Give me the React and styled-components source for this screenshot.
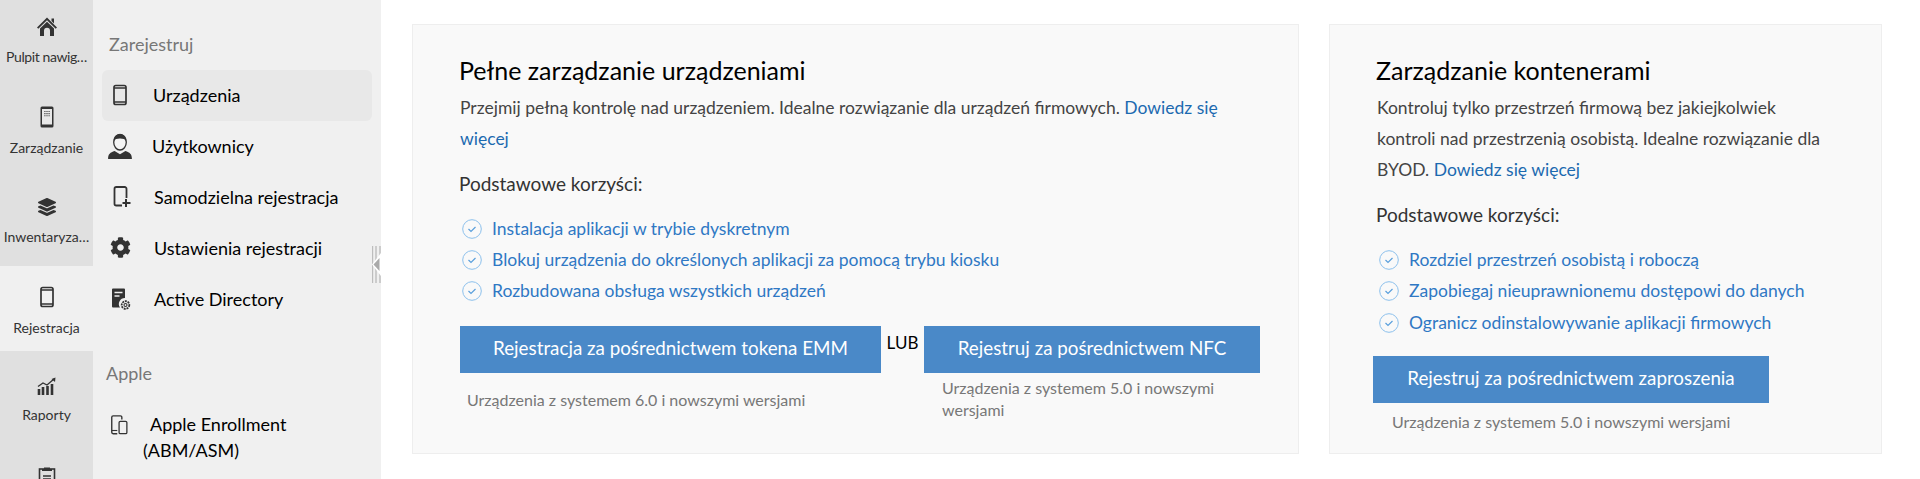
import React from 'react';
import styled, { createGlobalStyle } from 'styled-components';
import { FaLayerGroup, FaCog } from 'react-icons/fa';

const Global = createGlobalStyle`
  html, body { margin: 0; padding: 0; height: 100%; overflow: hidden; background: #fff; }
  body { font-family: Lato, "Noto Sans", sans-serif; }
  * { box-sizing: border-box; }
`;

const Page = styled.div`display: flex; height: 100vh; overflow: hidden;`;

const Rail = styled.nav`width: 93px; flex: none; background: #e0e0e0; overflow: hidden;`;
const RailList = styled.div`margin-top: -4px;`;
const RailItem = styled.div`
  height: 85px; margin-bottom: 5px; display: flex; flex-direction: column; align-items: center;
  padding-top: 19px; color: #333;
  background: ${p => (p.$active ? '#f0f0f0' : 'transparent')};
`;
const RailIcon = styled.div`height: 24px; width: 24px; display: flex; align-items: center; justify-content: center; color: #333;`;
const RailLabel = styled.div`
  margin-top: ${p => p.$top ?? 8}px; font-size: 14px; line-height: 20px; text-align: center; color: #333; white-space: nowrap;
  letter-spacing: ${p => p.$tight || 0}px;
`;

const SubPanel = styled.aside`
  position: relative; width: 288px; flex: none; background: #f0f0f0; padding: 32px 9px 0 9px; overflow: hidden;
`;
const SubHeading = styled.div`
  font-size: 18px; line-height: 24px; color: #777; padding-left: ${p => p.$indent}px;
  margin-top: ${p => p.$top || 0}px; margin-bottom: ${p => p.$bottom || 0}px;
`;
const SubRow = styled.div`
  height: 51px; display: flex; align-items: center; border-radius: 6px; color: #000; padding-bottom: 2px;
  font-size: 18px; background: ${p => (p.$active ? '#e8e8e8' : 'transparent')};
`;
const SubIcon = styled.span`width: 36px; flex: none; display: flex; align-items: center; justify-content: center;`;
const SubText = styled.span`margin-left: ${p => p.$gap}px;`;
const AppleRow = styled.div`
  color: #000; font-size: 18px; line-height: 26px; padding-left: 41px; width: 240px;
`;
const AppleIcon = styled.span`display: inline-flex; vertical-align: -5px; margin-left: -34px; margin-right: 19px; width: 22px;`;
const Handle = styled.div`position: absolute; right: 0; top: 246px; width: 9px; height: 37px;`;

const Main = styled.main`
  flex: 1; min-width: 0; height: 100vh; overflow-y: scroll; padding: 24px 0 0 31px; background: #fff;
  &::-webkit-scrollbar { width: 21px; }
  &::-webkit-scrollbar-track { background: #f1f1f1; }
  &::-webkit-scrollbar-thumb { background: #c1c1c1; border: 2px solid #f1f1f1; border-top: 0; border-bottom: 0; }
`;
const Cards = styled.div`display: flex; gap: 30px; align-items: flex-start; min-height: 711px;`;
const Card = styled.section`
  width: ${p => p.$w}px; height: 430px; flex: none; background: #f9f9f9; border: 1px solid #eee;
  padding: 28px 0 0 ${p => p.$pad}px;
`;
const Title = styled.h2`margin: 0; font-size: 25px; font-weight: 400; line-height: 34px; color: #000;`;
const Para = styled.p`margin: 5px 0 0 1px; font-size: 17.5px; line-height: 31px; color: #444; width: ${p => p.$w}px;`;
const Link = styled.a`color: #1c6ab0; text-decoration: none;`;
const Benefits = styled.div`margin-top: 14px; font-size: 19px; line-height: 31px; color: #333;`;
const List = styled.ul`list-style: none; margin: 14px 0 0 3px; padding: 0;`;
const ListItem = styled.li`display: flex; align-items: center; height: 31px; font-size: 17.5px; color: #2f78c4; margin-top: ${p => p.$nudge || 0}px;`;
const Check = styled.span`display: flex; width: 30px; flex: none;`;
const ButtonRow = styled.div`display: flex; margin: ${p => p.$top}px 0 0 ${p => p.$left || 0}px; align-items: flex-start;`;
const Col = styled.div`width: ${p => p.$w}px; flex: none;`;
const Button = styled.button`
  display: block; width: 100%; height: 47px; border: 0; border-radius: 0; background: #4a89c8; color: #fff;
  font-family: inherit; font-size: 18.8px; padding: 0 0 4px;
`;
const Lub = styled.div`width: 43px; flex: none; text-align: center; font-size: 17px; line-height: 24px; padding-top: 5px; color: #000;`;
const Caption = styled.div`
  font-size: 16px; line-height: 22px; color: #777;
  margin: ${p => p.$top}px 0 0 ${p => p.$left}px; width: ${p => p.$w || 'auto'};
`;

const Svg = ({ s = 24, children, vb = '0 0 24 24' }) => (
  <svg width={s} height={s} viewBox={vb} fill="none" aria-hidden="true">{children}</svg>
);

const Home = () => (
  <Svg>
    <path d="M12 2.500 22 12.500l-1.300 1.300L12 5.200 3.300 13.800 2 12.500z" fill="#333" />
    <path d="M16.500 3.500h2.500v5l-2.500-2.500z" fill="#333" />
    <path d="M5 13.500 12 6.800l7 6.700v7.500h-4v-5.200a3 3 0 0 0-6 0V21H5z" fill="#333" />
  </Svg>
);
const Phone = ({ s = 24 }) => (
  <Svg s={s}><rect x="6" y="2.5" width="12" height="19" rx="1.8" stroke="#333" strokeWidth="1.7" /><path d="M6 5h12M6 19h12" stroke="#333" strokeWidth="1.4" /></Svg>
);
const TabletGrid = () => (
  <Svg><rect x="5.5" y="1.5" width="13" height="21" rx="1.5" fill="#333" /><rect x="7" y="4" width="10" height="15.5" fill="#e8e8e8" />
    <path d="M9.3 6.5h1.2M11.4 6.5h1.2M13.5 6.5h1.2M9.3 8.6h1.2M11.4 8.6h1.2M13.5 8.6h1.2M9.3 10.7h1.2M11.4 10.7h1.2M13.5 10.7h1.2" stroke="#444" strokeWidth="1.1" /></Svg>
);
const Chart = () => (
  <Svg><path d="M4 20v-6M8 20v-8M12.5 20v-9M17 20v-11" stroke="#333" strokeWidth="2.6" /><path d="M3 11.5 8 8l4 2 7-6" stroke="#333" strokeWidth="1.3" /><path d="M20.5 2.5 20 7l-3.5-3z" fill="#333" /></Svg>
);
const Clipboard = () => (
  <Svg><rect x="4.5" y="4" width="15" height="18" stroke="#333" strokeWidth="1.6" /><path d="M9 4V2.5h6V4h2v2H7V4z" fill="#333" /><path d="M8 11h8M8 14h8M8 17h5" stroke="#333" strokeWidth="1.3" /></Svg>
);
const Person = () => (
  <Svg s={26} vb="0 0 24 24"><path d="M1 24c0-5 2-6 6-7.500l5 3 5-3c4 1.500 6 2.500 6 7.500z" fill="#333" />
    <ellipse cx="12" cy="8.500" rx="5.800" ry="7.200" fill="#f5f5f5" stroke="#333" strokeWidth="1.200" /><path d="M6.300 8C6 3 9 1 12 1s6 2 5.700 7c-.7-2.500-3-3-5.700-3s-5 .5-5.700 3z" fill="#333" /></Svg>
);
const PhonePlus = () => (
  <Svg><path d="M14 20.500H8.300A1.800 1.800 0 0 1 6.500 18.700V3.800A1.800 1.800 0 0 1 8.300 2h8.400a1.800 1.800 0 0 1 1.800 1.800V13" stroke="#333" strokeWidth="1.800" /><path d="M18 14v8M14.500 18h8" stroke="#333" strokeWidth="2" /></Svg>
);
const ServerGear = () => (
  <Svg><path d="M5 1.500h11a1 1 0 0 1 1 1V11a6 6 0 0 0-5 9.500H5a1 1 0 0 1-1-1v-17a1 1 0 0 1 1-1z" fill="#333" /><path d="M6.500 5.500h8M6.500 9h5" stroke="#f0f0f0" strokeWidth="1.300" />
    <circle cx="17.500" cy="18" r="3.800" stroke="#333" strokeWidth="1.800" strokeDasharray="2 .8" /><circle cx="17.500" cy="18" r="1.500" stroke="#333" strokeWidth="1.100" /></Svg>
);
const Devices = () => (
  <Svg s={22}><path d="M9 21.500H4.500A1.500 1.500 0 0 1 3 20V3.500A1.500 1.500 0 0 1 4.500 2h8A1.500 1.500 0 0 1 14 3.500V6" stroke="#333" strokeWidth="1.500" /><rect x="11" y="8" width="8.500" height="13.500" rx="1.400" stroke="#333" strokeWidth="1.400" /><path d="M3 18h6" stroke="#333" strokeWidth="1.200" /></Svg>
);
const CheckIcon = () => (
  <Svg s={20} vb="0 0 20 20"><circle cx="10" cy="10" r="9.300" stroke="#8cc0ec" strokeWidth="1" /><path d="m6.500 10 2.500 2.500 4.500-4.500" stroke="#5a9fdc" strokeWidth="1.200" /></Svg>
);
const HandleArt = () => (
  <svg width="9" height="37" viewBox="0 0 9 37" aria-hidden="true">
    <path d="M.5 0v37M4 0v37M8 0v37" stroke="#bdbdbd" strokeWidth="1.400" />
    <path d="M9 7v23L0 18.500z" fill="#fff" /><path d="M7.500 12v13L1.500 18.500z" fill="#aaa" />
  </svg>
);

const railItems = [
  { label: 'Pulpit nawig…', icon: <Home />, tight: -0.4 },
  { label: 'Zarządzanie', icon: <TabletGrid />, top: 9 },
  { label: 'Inwentaryza…', icon: <FaLayerGroup size={18} /> },
  { label: 'Rejestracja', icon: <Phone />, active: true, top: 9 },
  { label: 'Raporty', icon: <Chart />, top: 6 },
  { icon: <Clipboard /> },
];

const subRows = [
  { label: 'Urządzenia', icon: <Phone />, gap: 15, active: true },
  { label: 'Użytkownicy', icon: <Person />, gap: 14 },
  { label: 'Samodzielna rejestracja', icon: <PhonePlus />, gap: 16 },
  { label: 'Ustawienia rejestracji', icon: <FaCog size={21} color="#333" />, gap: 16 },
  { label: 'Active Directory', icon: <ServerGear />, gap: 16 },
];

const Benefit = ({ children, nudge }) => (
  <ListItem $nudge={nudge}><Check><CheckIcon /></Check>{children}</ListItem>
);

export default function App() {
  return (
    <Page>
      <Global />
      <Rail>
        <RailList>
          {railItems.map((i, n) => (
            <RailItem key={n} $active={i.active}>
              <RailIcon>{i.icon}</RailIcon>
              {i.label && <RailLabel $top={i.top} $tight={i.tight}>{i.label}</RailLabel>}
            </RailItem>
          ))}
        </RailList>
      </Rail>
      <SubPanel>
        <SubHeading $indent={7} $bottom={14}>Zarejestruj</SubHeading>
        {subRows.map(r => (
          <SubRow key={r.label} $active={r.active}>
            <SubIcon>{r.icon}</SubIcon>
            <SubText $gap={r.gap}>{r.label}</SubText>
          </SubRow>
        ))}
        <SubHeading $indent={4} $top={36} $bottom={26}>Apple</SubHeading>
        <AppleRow>
          <AppleIcon><Devices /></AppleIcon>Apple Enrollment (ABM/ASM)
        </AppleRow>
        <Handle><HandleArt /></Handle>
      </SubPanel>
      <Main>
        <Cards>
          <Card $w={887} $pad={46}>
            <Title>Pełne zarządzanie urządzeniami</Title>
            <Para $w={790}>
              Przejmij pełną kontrolę nad urządzeniem. Idealne rozwiązanie dla urządzeń firmowych. <Link>Dowiedz się więcej</Link>
            </Para>
            <Benefits>Podstawowe korzyści:</Benefits>
            <List>
              <Benefit>Instalacja aplikacji w trybie dyskretnym</Benefit>
              <Benefit>Blokuj urządzenia do określonych aplikacji za pomocą trybu kiosku</Benefit>
              <Benefit>Rozbudowana obsługa wszystkich urządzeń</Benefit>
            </List>
            <ButtonRow $top={20} $left={1}>
              <Col $w={421}>
                <Button>Rejestracja za pośrednictwem tokena EMM</Button>
                <Caption $top={16} $left={7}>Urządzenia z systemem 6.0 i nowszymi wersjami</Caption>
              </Col>
              <Lub>LUB</Lub>
              <Col $w={336}>
                <Button>Rejestruj za pośrednictwem NFC</Button>
                <Caption $top={4} $left={18} $w="300px">Urządzenia z systemem 5.0 i nowszymi wersjami</Caption>
              </Col>
            </ButtonRow>
          </Card>
          <Card $w={553} $pad={46}>
            <Title>Zarządzanie kontenerami</Title>
            <Para $w={450}>
              Kontroluj tylko przestrzeń firmową bez jakiejkolwiek kontroli nad przestrzenią osobistą. Idealne rozwiązanie dla BYOD. <Link>Dowiedz się więcej</Link>
            </Para>
            <Benefits>Podstawowe korzyści:</Benefits>
            <List>
              <Benefit>Rozdziel przestrzeń osobistą i roboczą</Benefit>
              <Benefit>Zapobiegaj nieuprawnionemu dostępowi do danych</Benefit>
              <Benefit nudge={1}>Ogranicz odinstalowywanie aplikacji firmowych</Benefit>
            </List>
            <ButtonRow $top={18} $left={-3}>
              <Col $w={396}>
                <Button>Rejestruj za pośrednictwem zaproszenia</Button>
                <Caption $top={8} $left={19}>Urządzenia z systemem 5.0 i nowszymi wersjami</Caption>
              </Col>
            </ButtonRow>
          </Card>
        </Cards>
      </Main>
    </Page>
  );
}
